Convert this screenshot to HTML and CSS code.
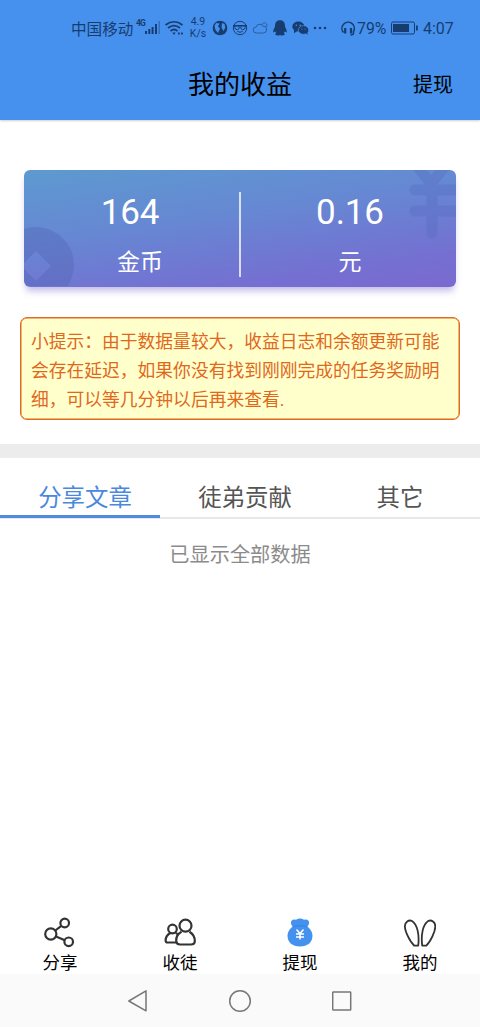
FILE: index.html
```html
<!DOCTYPE html>
<html lang="zh-CN">
<head>
<meta charset="utf-8">
<title>我的收益</title>
<link rel="stylesheet" href="styles.css">
</head>
<body>
<div class="app">
  <header class="header">
    <div class="status">
      <span class="carrier">中国移动</span>
      <span class="network">4G</span>
      <svg class="signal" width="16" height="14" viewBox="0 0 16 14" fill="currentColor"><path d="M0 10h2v3H0zM3.300 8h2v5h-2zM6.600 6h2v7h-2zM10 3h2v10h-2z"/><path d="M13.500 0h1.500v13h-1.500z" opacity=".4"/></svg>
      <svg class="wifi" width="20" height="16" viewBox="0 0 20 16" fill="none" stroke="currentColor" stroke-width="1.700"><path d="M1.500 5Q10-1.500 18.500 5M4 8Q10 3.200 16 8M6.500 11Q10 8 13.500 11"/><path d="M8.300 12.500h3.400L10 15z" fill="currentColor" stroke="none"/><path d="M14 13.500h1.800M17 13.500h1.800" stroke-width="2"/></svg>
      <span class="speed"><span>4.9</span><span>K/s</span></span>
      <span class="notices">
        <svg width="16" height="16" viewBox="0 0 16 16"><circle cx="8" cy="8" r="7.300" fill="currentColor"/><path d="M4 3l3.500.5-1.500 3L8 8.500 6 13 3.500 10l-1-4zM10 3l2.500 1 .8 3.500L11.500 11 9.500 7.500z" fill="#4691ee"/></svg>
        <svg width="16" height="16" viewBox="0 0 16 16" fill="none" stroke="currentColor"><circle cx="8" cy="8" r="6.700"/><path d="M1 5.500h14M2.500 6h4.700v1.300a2.100 2.100 0 0 1-4.200.4zM8.800 6h4.700l-.5 1.700a2.100 2.100 0 0 1-4.200-.4zM5.300 11.300q2.700 2 5.400 0"/></svg>
        <svg width="16" height="16" viewBox="0 0 16 16" fill="none" stroke="currentColor" stroke-width=".8" opacity=".75"><path d="M4.300 13a3 3 0 0 1-.2-6A3.600 3.600 0 0 1 10.700 6a3.500 3.500 0 0 1 .8 7zM10 4.900a2.500 2.500 0 1 1 4 2.400"/></svg>
        <svg width="16" height="16" viewBox="0 0 16 16" fill="currentColor"><path d="M8 .3C4.800.3 3 2.300 3 5.300L2.900 7Q.8 10 1.300 12.600l2-1q.3.900.9 1.600-1.400.6-.9 1.600Q5.800 16.200 8 15q2.200 1.200 4.700-.2.500-1-.9-1.600.6-.7.900-1.600l2 1Q15.200 10 13.100 7L13 5.300C13 2.300 11.200.3 8 .3z"/></svg>
        <svg width="17" height="16" viewBox="0 0 17 16"><ellipse cx="6.300" cy="6.500" rx="6" ry="5" fill="currentColor"/><path d="M2 9.500v3.800l3-2z" fill="currentColor"/><ellipse cx="11.500" cy="10" rx="5.200" ry="4.300" fill="currentColor" stroke="#4691ee" stroke-width=".7"/><path d="M14 13l1.500 2v-3z" fill="currentColor"/><g fill="#4691ee"><circle cx="4.300" cy="5.200" r=".8"/><circle cx="8.200" cy="5.200" r=".8"/><circle cx="9.800" cy="9" r=".6"/><circle cx="13" cy="9" r=".6"/></g></svg>
      </span>
      <svg class="more" width="14" height="4" viewBox="0 0 14 4" fill="currentColor"><circle cx="2" cy="2" r="1.300"/><circle cx="7" cy="2" r="1.300"/><circle cx="12" cy="2" r="1.300"/></svg>
      <svg class="headset" width="16" height="16" viewBox="0 0 16 16" fill="none" stroke="currentColor" stroke-width="1.600"><path d="M3.500 12.500A6.200 6.200 0 1 1 13.500 11.500V13q0 2-3 2"/><path d="M5.200 8v5.500M11 8v5.500" stroke-width="2.200"/></svg>
      <span class="percent">79%</span>
      <svg class="battery" width="27" height="14" viewBox="0 0 27 14"><rect x=".5" y="1" width="23" height="12" rx="1.500" fill="none" stroke="currentColor"/><path d="M2 3h16v8H2zM25 4.500h1.800v5H25z" fill="currentColor"/></svg>
      <span class="clock">4:07</span>
    </div>
    <div class="titlebar">
      <span></span>
      <h1 class="title">我的收益</h1>
      <a class="action">提现</a>
    </div>
  </header>

  <main class="main">
    <section class="card">
      <svg class="card-art" width="432" height="116" viewBox="0 0 432 116">
        <path fill-rule="evenodd" fill="#4f61b2" fill-opacity=".36" d="M12 57a38 38 0 1 1 0 76a38 38 0 1 1 0-76zM12 81L-3 96l15 15 15-15z"/>
        <path d="M390-8l17 22 17-22M391 20h41M391 41h41M408 14v49" fill="none" stroke="#566cc0" stroke-width="11" stroke-linecap="round" stroke-linejoin="round" opacity=".38"/>
      </svg>
      <div class="stat coins"><b class="value">164</b><span class="unit">金币</span></div>
      <div class="divider"></div>
      <div class="stat yuan"><b class="value">0.16</b><span class="unit">元</span></div>
    </section>
    <p class="tip">小提示：由于数据量较大，收益日志和余额更新可能会存在延迟，如果你没有找到刚刚完成的任务奖励明细，可以等几分钟以后再来查看.</p>
    <div class="band"></div>
    <nav class="tabs">
      <a class="tab active">分享文章</a>
      <a class="tab">徒弟贡献</a>
      <a class="tab">其它</a>
    </nav>
    <p class="empty">已显示全部数据</p>
  </main>

  <nav class="menu">
    <a class="item">
      <svg width="32" height="32" viewBox="0 0 32 32" fill="none" stroke="#333" stroke-width="2.200"><circle cx="6.800" cy="17" r="5.600"/><circle cx="20.700" cy="6" r="4.300"/><circle cx="24.700" cy="24.800" r="4.300"/><path d="M11.300 13.500l6-4.700M12 19.500l8.800 3.700"/></svg>
      <span>分享</span>
    </a>
    <a class="item">
      <svg width="32" height="32" viewBox="0 0 32 32" fill="none" stroke="#333" stroke-width="2.200" stroke-linejoin="round"><circle cx="8.500" cy="12" r="4.300"/><circle cx="21.500" cy="8.700" r="6"/><path d="M17.500 14.800C13.500 17 12 20.500 12.200 24Q12.500 27.500 16 27.500h11q3.800 0 3.800-3.500C30.800 20 29 17 25.500 14.800"/><path d="M6.500 16C3.500 17.500 1.600 20.300 1.600 23.500q0 2 2 2H12M11.500 16q1.500.5 2.500 1.500"/></svg>
      <span>收徒</span>
    </a>
    <a class="item">
      <svg width="32" height="32" viewBox="0 0 32 32"><path fill="#4592ee" d="M8.500 9.500Q6 6.500 7.500 3.800 9 2 12 2.700q4-2.400 8 0 3-.7 4.500 1.100 1.500 2.700-1 5.700Q28.500 14 28.500 18.500c0 7-5 11-12.500 11S3.500 25.500 3.500 18.500Q3.500 14 8.500 9.500z"/><path d="M9.500 9.400q6.500-1.500 13 0" fill="none" stroke="#2f80e0" stroke-width=".8"/><path d="M12.500 12.500l3.500 4 3.500-4M12 17h8M12 20h8M16 16.500v6" fill="none" stroke="#fff" stroke-width="1.500"/></svg>
      <span>提现</span>
    </a>
    <a class="item">
      <svg width="32" height="32" viewBox="0 0 32 32" fill="none" stroke="#333" stroke-width="1.800" stroke-linejoin="round"><path d="M10.300 28.700C5.500 24.500 1 14 .9 9.500.8 5 4.800 2.500 8 4c5.500 3.500 7.500 14 6.200 24.700zM22.200 28.700C27 24.500 31.200 14 31.300 9.500 31.400 5 27.400 2.500 24.200 4 18.700 7.500 16.900 18 18.200 28.700z"/></svg>
      <span>我的</span>
    </a>
  </nav>

  <footer class="system">
    <svg width="20" height="24" viewBox="0 0 20 24"><path d="M.8 12L18 1.800v20z"/></svg>
    <svg width="24" height="24" viewBox="0 0 24 24"><circle cx="12" cy="12" r="10.300"/></svg>
    <svg width="20" height="24" viewBox="0 0 20 24"><rect x=".7" y="3" width="18" height="18" rx=".6"/></svg>
  </footer>
</div>
</body>
</html>
```
FILE: styles.css
```css
* { box-sizing: border-box; }
body {
  margin: 0;
  background: #fff;
  font-family: Roboto, "Noto Sans CJK SC", sans-serif;
  color: #000;
}
svg { display: block; flex: none; }
.app { width: 480px; height: 1027px; display: flex; flex-direction: column; overflow: hidden; }

.header { height: 120px; flex: none; background: #4691ee; box-shadow: 0 1px 2px rgba(0,0,0,.2); }
.status { height: 54px; padding: 2px 0 0 71px; display: flex; align-items: center; color: #173d70; white-space: nowrap; }
.carrier { width: 65px; font-size: 15.6px; }
.network { width: 9px; font-size: 8.500px; font-weight: 700; letter-spacing: -.8px; padding-bottom: 10px; }
.wifi { margin-left: 3px; }
.speed { width: 26px; margin-left: 1px; display: flex; flex-direction: column; align-items: center; font-size: 10.500px; line-height: 12px; }
.notices { margin-left: 1px; display: flex; gap: 4px; }
.more { margin-left: 4px; }
.headset { margin-left: 13px; }
.percent { width: 34px; margin-left: 1px; font-size: 15.800px; }
.clock { margin-left: 5px; font-size: 16px; }

.titlebar { height: 60px; padding: 0 27px; display: grid; grid-template-columns: 1fr auto 1fr; align-items: center; }
.title { margin: 0; font-size: 26px; font-weight: 400; line-height: 60px; padding-top: 1px; }
.action { justify-self: end; font-size: 20px; line-height: 58px; }

.main { flex: 1; display: flex; flex-direction: column; }
.card {
  position: relative;
  height: 117px;
  margin: 50px 24px 0;
  display: grid;
  grid-template-columns: 215px 2px 1fr;
  border-radius: 6px;
  background: linear-gradient(172deg, #5d9ad0 0%, #6688d3 40%, #7470d1 80%, #7b69cf 100%);
  box-shadow: 0 6px 7px -2px rgba(123,105,207,.45);
  color: #fff;
}
.card-art { position: absolute; inset: 0; border-radius: 6px; overflow: hidden; }
.stat { position: relative; display: flex; flex-direction: column; align-items: center; padding-top: 21px; }
.coins .value { margin-right: 3px; }
.coins .unit { margin-left: 17px; }
.yuan { padding-left: 3px; }
.value { font-size: 35px; font-weight: 400; line-height: 44px; letter-spacing: -.1px; }
.unit { margin-top: 11px; font-size: 23px; line-height: 34px; }
.divider { position: relative; height: 85px; margin-top: 22px; background: rgba(255,255,255,.75); }
.tip {
  height: 103px;
  margin: 30px 20px 24px;
  padding: 10px 9px 0 10px;
  border: 1px solid #df6b20;
  box-shadow: inset 0 0 0 .5px #df6b20;
  border-radius: 7px;
  background: #ffc;
  color: #df681c;
  font-size: 17.780px;
  line-height: 29px;
}
.band { height: 14px; background: #ececec; }
.tabs { height: 61px; display: grid; grid-template-columns: repeat(3, 160px); border-bottom: 2px solid #e8e8e8; }
.tab { height: 60px; padding: 23px 0 0 10px; text-align: center; font-size: 23.400px; line-height: 34px; color: #555; }
.tab.active { border-bottom: 3px solid #508be2; color: #4a87e0; }
.tab:last-child { padding-left: 0; }
.empty { margin: 21px 0 0; text-align: center; font-size: 20.200px; line-height: 30px; color: #8b8b8b; }

.menu { height: 58px; display: flex; }
.item { flex: 1; display: flex; flex-direction: column; align-items: center; gap: 1px; padding-top: 1px; font-size: 17.500px; line-height: 26px; }
.system { height: 53px; padding: 0 128px; display: flex; align-items: center; justify-content: space-between; background: #fafafa; }
.system svg { fill: none; stroke: #777; stroke-width: 1.500; stroke-linejoin: round; }
```
